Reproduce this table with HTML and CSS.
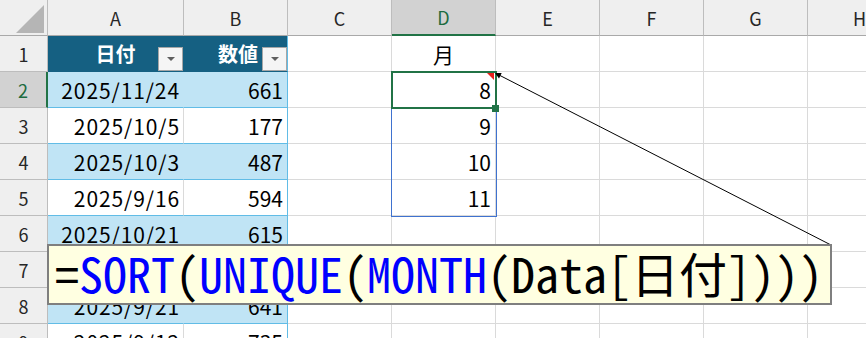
FILE: index.html
```html
<!DOCTYPE html>
<html lang="ja">
<head>
<meta charset="utf-8">
<title>SORT UNIQUE MONTH</title>
<link rel="stylesheet" href="styles.css">
</head>
<body>
<div class="sheet">
  <div class="grid">
    <div class="cell ch corner"></div>
    <div class="cell ch">A</div>
    <div class="cell ch">B</div>
    <div class="cell ch">C</div>
    <div class="cell ch sel">D</div>
    <div class="cell ch">E</div>
    <div class="cell ch">F</div>
    <div class="cell ch">G</div>
    <div class="cell ch">H</div>

    <div class="cell rh">1</div>
    <div class="cell th a"><span class="th-text">日付</span><span class="filter"><span class="tri"></span></span></div>
    <div class="cell th b"><span>数値</span><span class="filter"><span class="tri"></span></span></div>
    <div class="cell"></div>
    <div class="cell center">月</div>
    <div class="cell"></div><div class="cell"></div><div class="cell"></div><div class="cell"></div>

    <div class="cell rh sel">2</div>
    <div class="cell band a date">2025/11/24</div>
    <div class="cell band b">661</div>
    <div class="cell"></div>
    <div class="cell note">8</div>
    <div class="cell"></div><div class="cell"></div><div class="cell"></div><div class="cell"></div>

    <div class="cell rh">3</div>
    <div class="cell plain a date">2025/10/5</div>
    <div class="cell plain b">177</div>
    <div class="cell"></div>
    <div class="cell">9</div>
    <div class="cell"></div><div class="cell"></div><div class="cell"></div><div class="cell"></div>

    <div class="cell rh">4</div>
    <div class="cell band a date">2025/10/3</div>
    <div class="cell band b">487</div>
    <div class="cell"></div>
    <div class="cell">10</div>
    <div class="cell"></div><div class="cell"></div><div class="cell"></div><div class="cell"></div>

    <div class="cell rh">5</div>
    <div class="cell plain a date">2025/9/16</div>
    <div class="cell plain b">594</div>
    <div class="cell"></div>
    <div class="cell">11</div>
    <div class="cell"></div><div class="cell"></div><div class="cell"></div><div class="cell"></div>

    <div class="cell rh">6</div>
    <div class="cell band a date">2025/10/21</div>
    <div class="cell band b">615</div>
    <div class="cell"></div><div class="cell"></div>
    <div class="cell"></div><div class="cell"></div><div class="cell"></div><div class="cell"></div>

    <div class="cell rh">7</div>
    <div class="cell plain a date"></div>
    <div class="cell plain b"></div>
    <div class="cell"></div><div class="cell"></div>
    <div class="cell"></div><div class="cell"></div><div class="cell"></div><div class="cell"></div>

    <div class="cell rh">8</div>
    <div class="cell band a date">2025/9/21</div>
    <div class="cell band b">641</div>
    <div class="cell"></div><div class="cell"></div>
    <div class="cell"></div><div class="cell"></div><div class="cell"></div><div class="cell"></div>

    <div class="cell rh">9</div>
    <div class="cell plain a date">2025/9/12</div>
    <div class="cell plain b">735</div>
    <div class="cell"></div><div class="cell"></div>
    <div class="cell"></div><div class="cell"></div><div class="cell"></div><div class="cell"></div>
  </div>

  <div class="spill"></div>
  <div class="selbox"></div>
  <div class="handle"></div>

  <svg class="arrow" width="866" height="338" viewBox="0 0 866 338">
    <line x1="831" y1="245" x2="499" y2="75" stroke="#000" stroke-width="1"/>
    <polygon points="495,73 501.7,73 499,78.4" fill="#000"/>
  </svg>

  <div class="tooltip"><span class="op">=</span><span class="fn">SORT</span>(<span class="fn">UNIQUE</span>(<span class="fn">MONTH</span>(Data[日付])))</div>
</div>
</body>
</html>
```

FILE: styles.css
```css
html, body {
  margin: 0;
  padding: 0;
  background: #fff;
}

body {
  font-family: "Noto Sans CJK JP", "Liberation Sans", sans-serif;
}

.sheet {
  position: relative;
  width: 866px;
  height: 338px;
  overflow: hidden;
  background: #fff;
}

.grid {
  display: grid;
  grid-template-columns: 48px 136px repeat(7, 104px);
  grid-auto-rows: 36px;
}

.cell {
  box-sizing: border-box;
  border-right: 1px solid #dadada;
  border-bottom: 1px solid #dadada;
  display: flex;
  align-items: center;
  justify-content: flex-end;
  padding-right: 4px;
  font-size: 21px;
  color: #000;
  white-space: nowrap;
  overflow: hidden;
}

.date {
  letter-spacing: 0.9px;
  padding-right: 3px;
}

.center {
  justify-content: center;
  padding-right: 0;
}

/* column headers */
.ch {
  background: #efefef;
  border-right: 1px solid #bdbdbd;
  border-bottom: 1px solid #a9a9a9;
  justify-content: center;
  padding: 0;
  font-size: 18px;
  color: #262626;
}

.ch.sel {
  background: #d2d2d2;
  color: #1d6b40;
  border-bottom: 2px solid #217346;
}

.corner {
  position: relative;
}

.corner::after {
  content: "";
  position: absolute;
  right: 3px;
  bottom: 2px;
  width: 0;
  height: 0;
  border-left: 28px solid transparent;
  border-bottom: 28px solid #b5b5b5;
}

/* row headers */
.rh {
  background: #efefef;
  border-right: 1px solid #bdbdbd;
  border-bottom: 1px solid #bdbdbd;
  justify-content: center;
  padding: 0;
  font-size: 18px;
  color: #262626;
}

.rh.sel {
  background: #d2d2d2;
  color: #1d6b40;
  border-right: 2px solid #217346;
}

/* table */
.th {
  background: #156082;
  color: #fff;
  font-weight: bold;
  font-size: 20px;
  border-right-color: #156082;
  border-bottom-color: #156082;
  padding-right: 0;
  gap: 4px;
}

.th.a {
  padding-left: 29px;
}

.th-text {
  flex: 1;
  text-align: center;
}

.filter {
  align-self: flex-end;
  box-sizing: border-box;
  width: 25px;
  height: 24px;
  flex: none;
  background: #f5f5f5;
  border: 1px solid #a6a6a6;
  display: flex;
  align-items: center;
  justify-content: center;
}

.tri {
  width: 0;
  height: 0;
  border-left: 4px solid transparent;
  border-right: 4px solid transparent;
  border-top: 4px solid #5f5f5f;
}

.band {
  background: #c0e4f5;
  border-bottom-color: #61bce6;
}

.band.a {
  border-right-color: #c0e4f5;
}

.plain {
  background: #fff;
  border-bottom-color: #61bce6;
}

.plain.a {
  border-right-color: #dadada;
}

.b {
  border-right-color: #61bce6;
}

/* comment indicator */
.note {
  position: relative;
}

.note::after {
  content: "";
  position: absolute;
  top: 1px;
  right: 1px;
  width: 0;
  height: 0;
  border-left: 7px solid transparent;
  border-top: 7px solid #e8201c;
}

/* overlays */
.spill {
  position: absolute;
  left: 391px;
  top: 71px;
  width: 106px;
  height: 146px;
  box-sizing: border-box;
  border: 1px solid #3f72cf;
}

.selbox {
  position: absolute;
  left: 391px;
  top: 71px;
  width: 106px;
  height: 38px;
  box-sizing: border-box;
  border: 2px solid #217346;
}

.handle {
  position: absolute;
  left: 492px;
  top: 105px;
  width: 7px;
  height: 7px;
  background: #217346;
}

.arrow {
  position: absolute;
  left: 0;
  top: 0;
  pointer-events: none;
}

.tooltip {
  position: absolute;
  left: 47px;
  top: 244px;
  width: 785px;
  height: 61px;
  box-sizing: border-box;
  border: 2px solid #7f7f7f;
  background: #ffffe1;
  padding-left: 6px;
  font-family: "Noto Sans Mono CJK JP", "DejaVu Sans Mono", monospace;
  font-size: 48px;
  line-height: 53px;
  color: #000;
  white-space: nowrap;
  overflow: hidden;
}

.fn {
  color: #0000ff;
}
```
